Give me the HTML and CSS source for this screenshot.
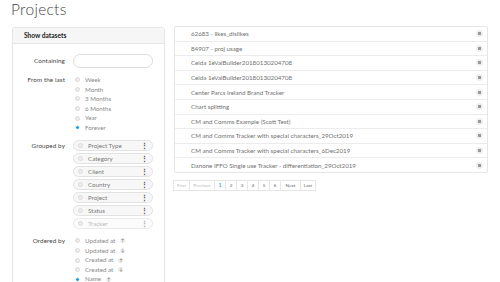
FILE: index.html
```html
<!DOCTYPE html>
<html>
<head>
<meta charset="utf-8">
<link rel="stylesheet" href="styles.css">
</head>
<body>
<h1 class="title">Projects</h1>
<div class="main">
  <div class="panel">
    <div class="panel-head">Show datasets</div>
    <div class="form">
      <div class="label lbl-contain">Containing</div>
      <div class="ctrl"><div class="input"></div></div>

      <div class="label lbl-radio">From the last</div>
      <div class="ctrl radios">
        <div class="radio"><span class="dot"></span>Week</div>
        <div class="radio"><span class="dot"></span>Month</div>
        <div class="radio"><span class="dot"></span>3 Months</div>
        <div class="radio"><span class="dot"></span>6 Months</div>
        <div class="radio"><span class="dot"></span>Year</div>
        <div class="radio"><span class="dot on"></span>Forever</div>
      </div>

      <div class="label lbl-group">Grouped by</div>
      <div class="ctrl pills">
        <div class="pill"><span class="dot"></span><span class="pt">Project Type</span><span class="keb">&#8942;</span></div>
        <div class="pill"><span class="dot"></span><span class="pt">Category</span><span class="keb">&#8942;</span></div>
        <div class="pill"><span class="dot"></span><span class="pt">Client</span><span class="keb">&#8942;</span></div>
        <div class="pill"><span class="dot"></span><span class="pt">Country</span><span class="keb">&#8942;</span></div>
        <div class="pill"><span class="dot"></span><span class="pt">Project</span><span class="keb">&#8942;</span></div>
        <div class="pill"><span class="dot"></span><span class="pt">Status</span><span class="keb">&#8942;</span></div>
        <div class="pill disabled"><span class="dot"></span><span class="pt">Tracker</span><span class="keb">&#8942;</span></div>
      </div>

      <div class="label lbl-radio">Ordered by</div>
      <div class="ctrl radios">
        <div class="radio"><span class="dot"></span>Updated at<span class="arr">&#8593;</span></div>
        <div class="radio"><span class="dot"></span>Updated at<span class="arr">&#8595;</span></div>
        <div class="radio"><span class="dot"></span>Created at<span class="arr">&#8593;</span></div>
        <div class="radio"><span class="dot"></span>Created at<span class="arr">&#8595;</span></div>
        <div class="radio"><span class="dot on"></span>Name<span class="arr">&#8593;</span></div>
      </div>
    </div>
  </div>
  <div class="content">
    <div class="list">
      <div class="row"><span class="name">62683 - likes_dislikes</span><span class="ico"><i></i></span></div>
      <div class="row"><span class="name">84907 - proj usage</span><span class="ico"><i></i></span></div>
      <div class="row"><span class="name">Celda 1eValBuilder20180130204708</span><span class="ico"><i></i></span></div>
      <div class="row"><span class="name">Celda 1eValBuilder20180130204708</span><span class="ico"><i></i></span></div>
      <div class="row"><span class="name">Center Parcs Ireland Brand Tracker</span><span class="ico"><i></i></span></div>
      <div class="row"><span class="name">Chart splitting</span><span class="ico"><i></i></span></div>
      <div class="row"><span class="name">CM and Comms Example (Scott Test)</span><span class="ico"><i></i></span></div>
      <div class="row"><span class="name">CM and Comms Tracker with special characters_29Oct2019</span><span class="ico"><i></i></span></div>
      <div class="row"><span class="name">CM and Comms Tracker with special characters_6Dec2019</span><span class="ico"><i></i></span></div>
      <div class="row"><span class="name">Danone IFFO Single use Tracker - differentiation_29Oct2019</span><span class="ico"><i></i></span></div>
    </div>
    <div class="pager">
      <span class="pg dis w-first">First</span>
      <span class="pg dis w-prev">Previous</span>
      <span class="pg cur">1</span>
      <span class="pg">2</span>
      <span class="pg">3</span>
      <span class="pg">4</span>
      <span class="pg">5</span>
      <span class="pg">6</span>
      <span class="pg w-next">Next</span>
      <span class="pg w-last">Last</span>
    </div>
  </div>
</div>
</body>
</html>
```
FILE: styles.css
```css
html, body { margin: 0; padding: 0; background: #fff; }
body {
  font-family: Lato, "Open Sans", sans-serif;
  color: #555;
  width: 500px;
  height: 282px;
  overflow: hidden;
}
.title {
  margin: 0;
  padding: 0 0 0 11px;
  font-size: 15.5px;
  font-weight: 300;
  color: #444;
  height: 27px;
  line-height: 19px;
  letter-spacing: 0.3px;
}
.main {
  display: flex;
  align-items: flex-start;
  padding-left: 12px;
  gap: 9px;
}
.panel {
  width: 153px;
  box-sizing: border-box;
  border: 1px solid #e6e6e6;
  border-radius: 3px;
  height: 270px;
}
.panel-head {
  height: 15px;
  background: #f6f6f6;
  border-bottom: 1px solid #e6e6e6;
  font-size: 6.6px;
  font-weight: 700;
  color: #222;
  padding-left: 11px;
  line-height: 15px;
}
.form {
  display: grid;
  grid-template-columns: 52px 81px;
  column-gap: 8px;
  padding-top: 10px;
  font-size: 6.2px;
}
.label {
  text-align: right;
  color: #444;
  font-weight: 400;
  font-size: 6.3px;
  letter-spacing: 0.1px;
}
.lbl-contain { line-height: 14px; }
.lbl-radio { line-height: 9.6px; }
.lbl-group { line-height: 11.5px; }
.ctrl { margin-bottom: 7px; }
.input {
  height: 14px;
  width: 80px;
  box-sizing: border-box;
  border: 1px solid #ddd;
  border-radius: 7px;
  background: #fff;
}
.radios .radio {
  height: 9.6px;
  line-height: 9.6px;
  display: flex;
  align-items: center;
  color: #888;
}
.dot {
  width: 5px;
  height: 5px;
  box-sizing: border-box;
  border-radius: 50%;
  background: #ececec;
  border: 0.5px solid #dcdcdc;
  display: inline-block;
  flex: none;
  margin: 0 5.5px 0 1.5px;
}
.dot.on {
  background: #1c9ee6;
  border: 1px solid #fff;
}
.arr {
  display: inline-flex;
  align-items: center;
  justify-content: center;
  width: 5px;
  height: 5px;
  border-radius: 50%;
  background: #eee;
  color: #666;
  font-size: 4.5px;
  margin-left: 5px;
  line-height: 5px;
}
.pills { margin-bottom: 5.5px; }
.pill {
  width: 80px;
  height: 11.5px;
  box-sizing: border-box;
  border: 1px solid #e2e2e2;
  border-radius: 6px;
  background: #f7f7f7;
  margin-bottom: 1.5px;
  display: flex;
  align-items: center;
  color: #777;
  font-size: 6.2px;
}
.pill .dot { margin: 0 5px 0 4px; }
.pill .pt { flex: 1; }
.pill .keb {
  font-size: 7px;
  color: #555;
  font-weight: 700;
  margin-right: 4px;
  line-height: 8px;
}
.pill.disabled { color: #bbb; background: #fbfbfb; border-color: #eaeaea; }
.pill.disabled .keb { color: #aaa; }
.content {
  width: 314px;
  margin-top: -1px;
}
.list {
  border: 1px solid #e6e6e6;
  border-radius: 2px;
}
.row {
  height: 14.6px;
  box-sizing: border-box;
  border-top: 1px solid #ececec;
  display: flex;
  align-items: center;
  padding-left: 16px;
  padding-right: 4px;
  font-size: 6.2px;
  color: #707070;
}
.row:first-child { border-top: none; height: 13.6px; }
.row .name { flex: 1; }
.ico {
  width: 7px;
  height: 7px;
  border-radius: 50%;
  background: #eeeeee;
  display: flex;
  align-items: center;
  justify-content: center;
}
.ico i {
  display: block;
  width: 3px;
  height: 3px;
  background: #999;
}
.pager {
  display: flex;
  margin-top: 7px;
  margin-left: -1px;
}
.pg {
  height: 11px;
  box-sizing: border-box;
  border: 1px solid #e6e6e6;
  margin-left: -1px;
  font-size: 4.6px;
  line-height: 9px;
  text-align: center;
  color: #666;
  width: 12px;
}
.pg:first-child { margin-left: 0; }
.pg.dis { color: #bbb; }
.pg.cur { color: #1c9ee6; font-weight: 700; }
.w-first { width: 17px; }
.w-prev { width: 26px; }
.w-next { width: 21px; }
.w-last { width: 16px; }
```
